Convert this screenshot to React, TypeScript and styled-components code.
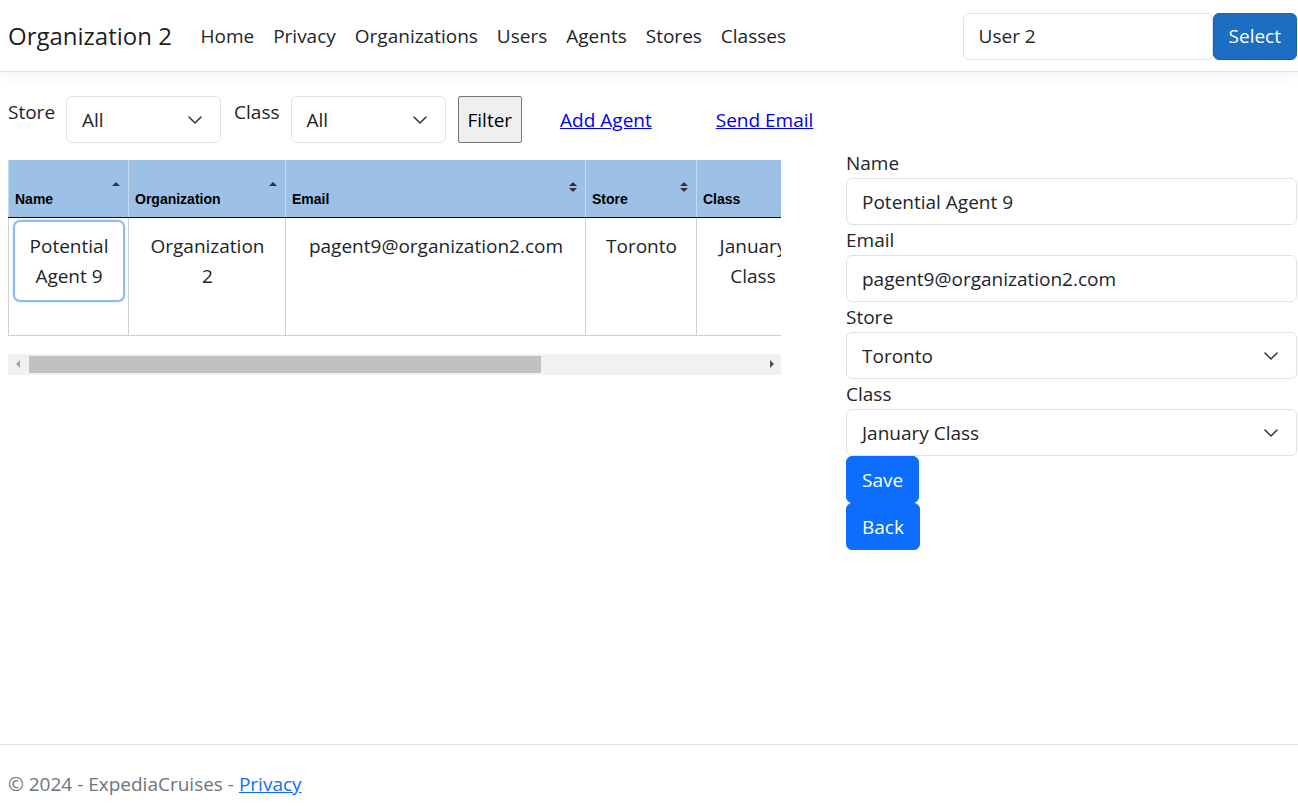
import React from "react";
import styled, { createGlobalStyle, css } from "styled-components";

const FONT = `"Open Sans", "Noto Sans", "Liberation Sans", sans-serif`;

const Global = createGlobalStyle`
  html, body { margin: 0; padding: 0; height: 100%; overflow: hidden; }
  body {
    font-family: ${FONT};
    font-size: 19px;
    line-height: 30px;
    color: #212529;
    background: #fff;
  }
  #root { height: 100%; }
  * { box-sizing: border-box; }
`;

const Page = styled.div`
  display: flex;
  flex-direction: column;
  height: 806px;
`;

const NavBar = styled.nav`
  height: 72px;
  flex: none;
  display: flex;
  align-items: center;
  padding: 1px 1px 0 8px;
  border-bottom: 1px solid #e5e5e5;
  box-shadow: 0 4px 12px rgba(0, 0, 0, 0.05);
`;

const Brand = styled.a`
  font-size: 24px;
  line-height: 36px;
  color: rgba(0, 0, 0, 0.9);
  text-decoration: none;
  margin-right: 19px;
`;

const NavLinks = styled.div`
  display: flex;
  flex: 1;
`;

const NavLink = styled.a`
  color: #212529;
  text-decoration: none;
  padding: 5px 9.5px;
`;

const UserForm = styled.div`
  display: flex;
  align-items: stretch;
  height: 47px;
`;

const UserInput = styled.div`
  width: 250px;
  border: 1px solid #dee2e6;
  border-radius: 6px;
  padding: 0 15px;
  display: flex;
  align-items: center;
`;

const PrimaryButton = styled.button<{ $tone?: "site" | "bs" }>`
  font-family: ${FONT};
  font-size: 19px;
  line-height: 30px;
  height: 47px;
  color: #fff;
  border-radius: 6px;
  padding: 0 15px;
  cursor: pointer;
  ${(p) =>
    p.$tone === "site"
      ? css`
          background: #1b6ec2;
          border: 1px solid #1861ac;
        `
      : css`
          background: #0d6efd;
          border: 1px solid #0d6efd;
        `}
`;

const Main = styled.main`
  flex: 1;
  display: grid;
  grid-template-columns: 830px 1fr;
  column-gap: 8px;
  padding: 24px 1px 0 8px;
  align-items: start;
`;

const LeftCol = styled.section`
  display: flex;
  flex-direction: column;
`;

const FilterRow = styled.div`
  display: flex;
  align-items: flex-start;
  height: 47px;
`;

const FilterLabel = styled.label`
  margin-top: 1px;
  margin-right: 11px;
`;

const SelectBox = styled.div<{ $w?: number }>`
  ${(p) => (p.$w ? `width: ${p.$w}px;` : "width: 100%;")}
  height: 47px;
  border: 1px solid #dee2e6;
  border-radius: 6px;
  padding: 0 17px 0 15px;
  display: flex;
  align-items: center;
  justify-content: space-between;
  background: #fff;
  color: #212529;
`;

const Chevron = () => (
  <svg width="16" height="16" viewBox="0 0 16 16" aria-hidden>
    <path d="M2 5l6 6 6-6" fill="none" stroke="#343a40" strokeWidth="1.6" strokeLinecap="round" strokeLinejoin="round" />
  </svg>
);

const Gap = styled.span<{ $w: number }>`
  width: ${(p) => p.$w}px;
  flex: none;
`;

const FilterButton = styled.button`
  font-family: ${FONT};
  font-size: 19px;
  height: 47px;
  padding: 0 9px;
  background: #efefef;
  border: 1px solid #767676;
  border-radius: 2px;
  color: #000;
`;

const PlainLink = styled.a<{ $ml: number }>`
  color: #0000ee;
  text-decoration: underline;
  margin-left: ${(p) => p.$ml}px;
  margin-top: 9px;
`;

const TableScroll = styled.div`
  width: 773px;
  overflow: hidden;
  margin-top: 17px;
`;

const Table = styled.table`
  border-collapse: collapse;
  table-layout: fixed;
  width: 1129px;
`;

const Th = styled.th<{ $w: number }>`
  position: relative;
  width: ${(p) => p.$w}px;
  height: 57px;
  background: #9cc0e6;
  font-family: "Liberation Sans", Arial, sans-serif;
  font-weight: bold;
  font-size: 14px;
  line-height: 16px;
  text-align: left;
  vertical-align: bottom;
  padding: 0 18px 10px 6px;
  color: #000;
  border-right: 1px solid #c5d9ef;
  border-bottom: 1px solid #111;
  &:first-child { border-left: 1px solid #c5d9ef; }
`;

const SortIcon = styled.span`
  position: absolute;
  top: 22px;
  right: 8px;
  display: flex;
  flex-direction: column;
  gap: 2px;
`;

const TriUp = styled.i`
  display: block;
  width: 0;
  height: 0;
  border-left: 4px solid transparent;
  border-right: 4px solid transparent;
  border-bottom: 4px solid #333;
`;

const TriDown = styled.i`
  display: block;
  width: 0;
  height: 0;
  border-left: 4px solid transparent;
  border-right: 4px solid transparent;
  border-top: 4px solid #333;
`;

const Td = styled.td`
  height: 118px;
  vertical-align: top;
  text-align: center;
  padding: 0 3px 0 4px;
  border-right: 1px solid #d0d0d0;
  border-bottom: 1px solid #d0d0d0;
  &:first-child { border-left: 1px solid #d0d0d0; }
`;

const CellBox = styled.div<{ $focus?: boolean }>`
  margin-top: 2px;
  padding: 9px 10px;
  border: 2px solid transparent;
  border-radius: 7px;
  ${(p) =>
    p.$focus &&
    css`
      padding: 9px 6px;
      border-color: #8dbcf4;
      box-shadow: 0 0 0 1px rgba(13, 110, 253, 0.12);
    `}
`;

const ScrollBar = styled.div`
  margin-top: 18px;
  width: 773px;
  height: 21px;
  background: #f1f1f1;
  display: flex;
  align-items: center;
  padding: 0 6px;
`;

const ScrollThumb = styled.div`
  margin-left: 9px;
  width: 512px;
  height: 17px;
  background: #c1c1c1;
`;

const ArrowLeft = styled.i`
  display: block;
  width: 0;
  height: 0;
  border-top: 4px solid transparent;
  border-bottom: 4px solid transparent;
  border-right: 4px solid #a3a3a3;
  margin-left: 2px;
`;

const ArrowRight = styled.i`
  display: block;
  width: 0;
  height: 0;
  margin-left: auto;
  margin-right: 1px;
  border-top: 4px solid transparent;
  border-bottom: 4px solid transparent;
  border-left: 4px solid #505050;
`;

const RightCol = styled.section`
  padding-top: 52px;
  display: flex;
  flex-direction: column;
  align-items: flex-start;
`;

const FieldLabel = styled.label`
  display: block;
`;

const TextField = styled.div`
  width: 100%;
  height: 47px;
  border: 1px solid #dee2e6;
  border-radius: 6px;
  padding: 0 15px;
  display: flex;
  align-items: center;
`;

const Footer = styled.footer`
  flex: none;
  height: 62px;
  border-top: 1px solid #dee2e6;
  padding: 24px 0 0 8px;
  color: #6c757d;
`;

const FooterLink = styled.a`
  color: #0d6efd;
  text-decoration: underline;
`;

type Col = { key: string; label: string; w: number; sort?: "asc" | "both" };

const columns: Col[] = [
  { key: "name", label: "Name", w: 120, sort: "asc" },
  { key: "org", label: "Organization", w: 157, sort: "asc" },
  { key: "email", label: "Email", w: 300, sort: "both" },
  { key: "store", label: "Store", w: 111, sort: "both" },
  { key: "class", label: "Class", w: 112 },
  { key: "extra", label: "", w: 329 },
];

const row: Record<string, string> = {
  name: "Potential Agent 9",
  org: "Organization 2",
  email: "pagent9@organization2.com",
  store: "Toronto",
  class: "January Class",
  extra: "",
};

export default function App() {
  return (
    <>
      <Global />
      <Page>
        <NavBar>
          <Brand href="#">Organization 2</Brand>
          <NavLinks>
            {["Home", "Privacy", "Organizations", "Users", "Agents", "Stores", "Classes"].map((l) => (
              <NavLink key={l} href="#">
                {l}
              </NavLink>
            ))}
          </NavLinks>
          <UserForm>
            <UserInput>User 2</UserInput>
            <PrimaryButton $tone="site">Select</PrimaryButton>
          </UserForm>
        </NavBar>

        <Main>
          <LeftCol>
            <FilterRow>
              <FilterLabel>Store</FilterLabel>
              <SelectBox $w={155}>
                <span>All</span>
                <Chevron />
              </SelectBox>
              <Gap $w={13} />
              <FilterLabel>Class</FilterLabel>
              <SelectBox $w={155}>
                <span>All</span>
                <Chevron />
              </SelectBox>
              <Gap $w={12} />
              <FilterButton>Filter</FilterButton>
              <PlainLink href="#" $ml={38}>
                Add Agent
              </PlainLink>
              <PlainLink href="#" $ml={64}>
                Send Email
              </PlainLink>
            </FilterRow>

            <TableScroll>
              <Table>
                <thead>
                  <tr>
                    {columns.map((c) => (
                      <Th key={c.key} $w={c.w}>
                        {c.label}
                        {c.sort && (
                          <SortIcon>
                            <TriUp />
                            {c.sort === "both" && <TriDown />}
                          </SortIcon>
                        )}
                      </Th>
                    ))}
                  </tr>
                </thead>
                <tbody>
                  <tr>
                    {columns.map((c) => (
                      <Td key={c.key}>
                        <CellBox $focus={c.key === "name"}>{row[c.key]}</CellBox>
                      </Td>
                    ))}
                  </tr>
                </tbody>
              </Table>
            </TableScroll>
            <ScrollBar>
              <ArrowLeft />
              <ScrollThumb />
              <ArrowRight />
            </ScrollBar>
          </LeftCol>

          <RightCol>
            <FieldLabel>Name</FieldLabel>
            <TextField>Potential Agent 9</TextField>
            <FieldLabel>Email</FieldLabel>
            <TextField>pagent9@organization2.com</TextField>
            <FieldLabel>Store</FieldLabel>
            <SelectBox>
              <span>Toronto</span>
              <Chevron />
            </SelectBox>
            <FieldLabel>Class</FieldLabel>
            <SelectBox>
              <span>January Class</span>
              <Chevron />
            </SelectBox>
            <PrimaryButton>Save</PrimaryButton>
            <PrimaryButton>Back</PrimaryButton>
          </RightCol>
        </Main>

        <Footer>
          © 2024 - ExpediaCruises - <FooterLink href="#">Privacy</FooterLink>
        </Footer>
      </Page>
    </>
  );
}
